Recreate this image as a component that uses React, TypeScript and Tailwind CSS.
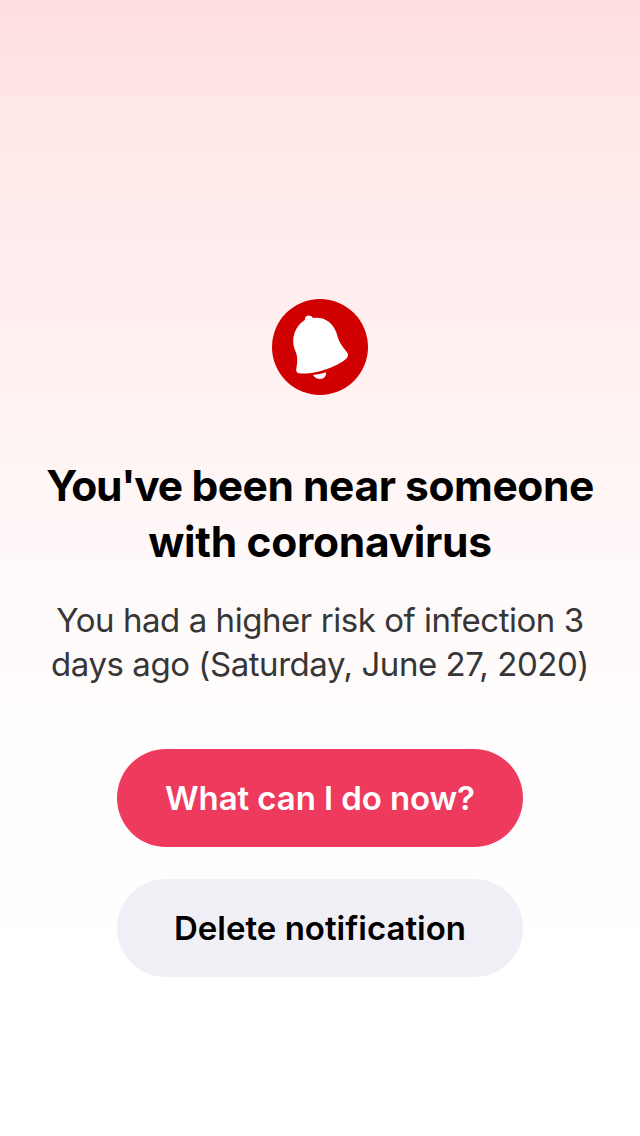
export default function App() {
  return (
    <main className="flex h-[1136px] w-[640px] flex-col items-center bg-[linear-gradient(to_bottom,#ffdfe1_0px,#ffe7e7_110px,#ffeced_250px,#fff1f1_370px,#fff6f6_490px,#fffafa_620px,#fffdfd_750px,#ffffff_1000px)] pt-[299px] text-center font-['Inter',sans-serif]">
      <svg className="size-24 shrink-0" viewBox="0 0 96 96" aria-hidden="true">
        <circle cx="48" cy="48" r="48" fill="#d10000" />
        <path
          fill="#fff"
          d="M32.800 21C32.500 17 36 15.500 39 17C40 17.500 40.500 18.500 41 19C53 17.500 61 24 64.500 34C66 40 68 44.500 72 49.500L75.500 54C76.500 55.500 76 58 74.500 59.500C65 68 43 75.500 29 74.500C25 74.300 24 73 24.300 70C26 61 25.500 56 22.500 50C19 39 23 27 32.800 21Z"
        />
        <path fill="#fff" d="M41 75.900Q48 75.400 54 73.200C55 80.500 45 82.500 41 75.900Z" />
      </svg>
      <h1 className="mt-[63px] text-[42.500px] leading-[56px] font-bold tracking-[-0.45px] whitespace-nowrap text-black">
        <span className="block">
          <span className="tracking-[-1.3px]">You've</span> been near someone
        </span>
        <span className="block tracking-[-0.3px]">with coronavirus</span>
      </h1>
      <p className="mt-[28px] text-[33px] leading-[44px] tracking-[-0.45px] whitespace-nowrap text-[#363636]">
        You had a higher risk of infection 3
        <br />
        days ago (Saturday, June 27, 2020)
      </p>
      <div className="mt-[63px] flex flex-col gap-8 text-[33px] font-semibold">
        <button className="h-[98px] w-[406px] rounded-full bg-[#ee3a5c] pt-[2px] tracking-[-0.1px] text-white">What can I do now?</button>
        <button className="h-[98px] w-[406px] rounded-full bg-[#f0eff5] pt-[2px] text-black">Delete notification</button>
      </div>
    </main>
  );
}
